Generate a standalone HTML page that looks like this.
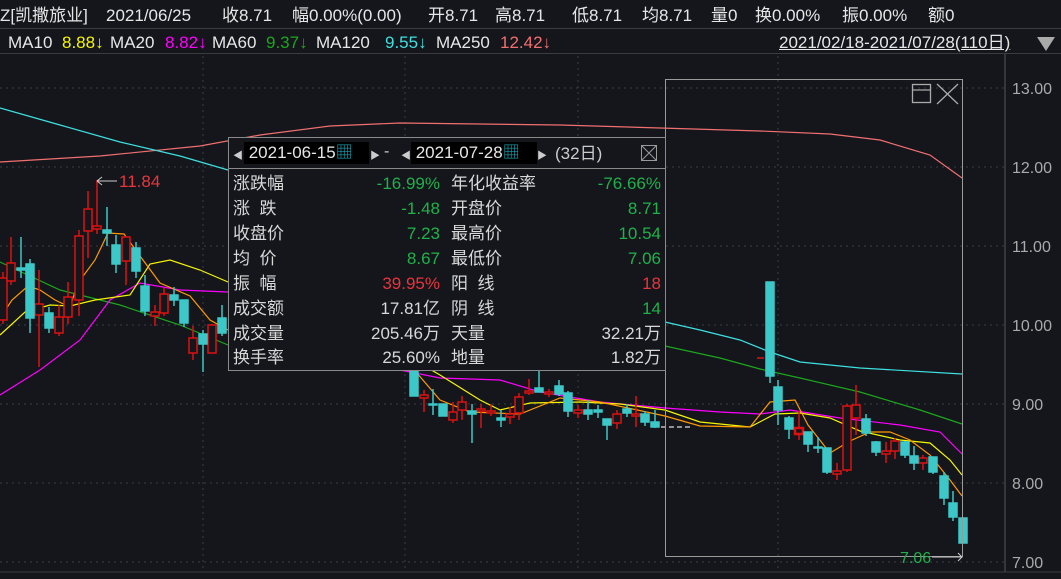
<!DOCTYPE html>
<html><head><meta charset="utf-8"><style>
body{margin:0;width:1061px;height:579px;background:#14161c;overflow:hidden;font-family:"Liberation Sans","Noto Sans CJK SC",sans-serif;position:relative}
.t{position:absolute;white-space:nowrap;font-size:17px;line-height:20px;color:#e6e6e6}
.pop{position:absolute;left:228px;top:137px;width:436px;height:232px;border:1px solid #8a8a8a;background:#14161c}
.row{position:absolute;left:0;width:436px;height:25px;font-size:17px;line-height:25px;color:#d8d8d8}
.row span{position:absolute;top:0;line-height:25px}
.g{color:#1fb14a}.r{color:#e8353d}
.db{position:absolute;top:4px;height:22px;background:#000;color:#e6e6e6;font-size:17px;line-height:22px}
</style></head><body>
<div class="t" style="left:0;top:6px">Z[凯撒旅业]</div>
<div class="t" style="left:106px;top:6px">2021/06/25</div>
<div class="t" style="left:222px;top:6px">收8.71</div>
<div class="t" style="left:292px;top:6px">幅0.00%(0.00)</div>
<div class="t" style="left:428px;top:6px">开8.71</div>
<div class="t" style="left:495px;top:6px">高8.71</div>
<div class="t" style="left:572px;top:6px">低8.71</div>
<div class="t" style="left:642px;top:6px">均8.71</div>
<div class="t" style="left:711px;top:6px">量0</div>
<div class="t" style="left:755px;top:6px">换0.00%</div>
<div class="t" style="left:842px;top:6px">振0.00%</div>
<div class="t" style="left:928px;top:6px">额0</div>
<div style="position:absolute;left:0;top:28px;width:1061px;height:1px;background:#3a3c42"></div>
<div class="t" style="left:8px;top:33px">MA10</div><div class="t" style="left:62px;top:33px;color:#f5f500">8.88↓</div>
<div class="t" style="left:110px;top:33px">MA20</div><div class="t" style="left:165px;top:33px;color:#f0f">8.82↓</div>
<div class="t" style="left:212px;top:33px">MA60</div><div class="t" style="left:266px;top:33px;color:#1ca61c">9.37↓</div>
<div class="t" style="left:316px;top:33px">MA120</div><div class="t" style="left:385px;top:33px;color:#3ee0e0">9.55↓</div>
<div class="t" style="left:436px;top:33px">MA250</div><div class="t" style="left:500px;top:33px;color:#f07070">12.42↓</div>
<div class="t" style="left:779px;top:33px;text-decoration:underline">2021/02/18-2021/07/28(110日)</div>
<div style="position:absolute;left:1037px;top:37px;width:0;height:0;border-left:9px solid transparent;border-right:9px solid transparent;border-top:14px solid #aaa"></div>
<div style="position:absolute;left:0;top:53px;width:1061px;height:1px;background:#3a3c42"></div>

<svg width="1061" height="579" style="position:absolute;left:0;top:0">
<g stroke="#3c3f46" stroke-dasharray="2,4" stroke-width="1">
<line x1="0" y1="88" x2="1005" y2="88"/><line x1="0" y1="167" x2="1005" y2="167"/><line x1="0" y1="246" x2="1005" y2="246"/><line x1="0" y1="325" x2="1005" y2="325"/><line x1="0" y1="404" x2="1005" y2="404"/><line x1="0" y1="483" x2="1005" y2="483"/><line x1="0" y1="562" x2="1005" y2="562"/>
<line x1="203" y1="56" x2="203" y2="572"/><line x1="405" y1="56" x2="405" y2="572"/><line x1="578" y1="56" x2="578" y2="572"/><line x1="778" y1="56" x2="778" y2="572"/>
</g>
<line x1="1005" y1="54" x2="1005" y2="572" stroke="#555"/>
<line x1="0" y1="572" x2="1061" y2="572" stroke="#3a3c42"/>
<g fill="#aaa" font-size="16" font-family="Liberation Sans">
<text x="1012" y="94">13.00</text><text x="1012" y="173">12.00</text><text x="1012" y="252">11.00</text><text x="1012" y="331">10.00</text><text x="1012" y="410">9.00</text><text x="1012" y="489">8.00</text><text x="1012" y="568">7.00</text>
</g>
<g fill="none" stroke-width="1.2">
<polyline stroke="#f07070" points="0,162 100,156 200,146 260,135 330,126 400,123 480,124 560,125 660,128 760,131 830,134 880,140 930,155 962,178"/>
<polyline stroke="#3ee0e0" points="0,108 60,125 120,142 180,156 228,170"/>
<polyline stroke="#3ee0e0" points="665,322 700,330 740,340 770,352 800,362 860,368 962,374"/>
<polyline stroke="#1ca61c" points="0,262 60,290 120,305 180,325 228,345"/>
<polyline stroke="#1ca61c" points="665,346 720,358 760,369 800,378 860,392 920,410 962,424"/>
<polyline stroke="#f0f" points="0,395 40,370 80,340 110,300 140,283 180,290 228,292"/>
<polyline stroke="#f0f" points="400,370 440,378 500,380 540,392 600,402 665,408 720,412 760,414 790,410 840,418 900,425 940,432 962,454"/>
<polyline stroke="#f5f500" points="0,335 25,312 50,305 70,306 95,300 130,295 150,264 170,260 200,270 228,282"/>
<polyline stroke="#f5f500" points="400,352 440,375 480,400 500,410 530,403 580,402 620,404 665,410 700,422 750,427 775,414 800,413 830,418 860,431 900,440 930,443 950,460 962,475"/>
<polyline stroke="#ff9900" points="0,318 12,300 28,286 40,290 55,300 70,307 78,283 95,260 108,233 124,234 140,256 160,283 190,296 210,320 228,330"/>
<polyline stroke="#ff9900" points="410,365 440,400 470,412 520,414 560,398 600,402 665,416 700,426 750,427 770,402 795,400 808,425 830,453 850,441 870,432 890,432 910,440 930,455 950,480 962,496"/>
<line x1="661" y1="427" x2="690" y2="427" stroke="#ddd" stroke-dasharray="5,3"/>
</g>
<g stroke-width="1.5">
<g stroke="#d11" fill="none">
<path d="M3,272V324M11,237V285M39,270V367M59,305V336M68,282V324M79,230V316M88,191V258M97,180V234M126,236V285M155,305V326M164,288V316M193,326V360M212,324V347M424,390V412M453,402V423M462,396V420M481,404V428M491,404V416M510,407V424M519,393V420M529,379V395M549,389V397M578,405V418M617,410V429M636,396V427M799,411V440M837,463V480M847,404V472M856,385V435M886,442V463M895,438V459M923,455V470"/>
<rect x="-1" y="278" width="8" height="42" fill="#14161c"/><rect x="7" y="263" width="8" height="18" fill="#14161c"/><rect x="35" y="304" width="8" height="11" fill="#14161c"/><rect x="55" y="317" width="8" height="16" fill="#14161c"/><rect x="64" y="297" width="8" height="20" fill="#14161c"/><rect x="75" y="236" width="8" height="64" fill="#14161c"/><rect x="84" y="209" width="8" height="22" fill="#14161c"/><rect x="93" y="226" width="8" height="3" fill="#14161c"/><rect x="122" y="237" width="8" height="24" fill="#14161c"/><rect x="151" y="312" width="8" height="4" fill="#14161c"/><rect x="160" y="294" width="8" height="19" fill="#14161c"/><rect x="189" y="338" width="8" height="15" fill="#14161c"/><rect x="208" y="325" width="8" height="28" fill="#14161c"/>
<rect x="420" y="395" width="8" height="3" fill="#14161c"/><rect x="449" y="412" width="8" height="8" fill="#14161c"/><rect x="458" y="402" width="8" height="8" fill="#14161c"/><rect x="477" y="409" width="8" height="2" fill="#14161c"/><rect x="487" y="411" width="8" height="2" fill="#14161c"/><rect x="506" y="414" width="8" height="3" fill="#14161c"/><rect x="515" y="397" width="8" height="16" fill="#14161c"/><rect x="525" y="391" width="8" height="2" fill="#14161c"/><rect x="545" y="392" width="8" height="2" fill="#14161c"/><rect x="574" y="410" width="8" height="3" fill="#14161c"/><rect x="613" y="414" width="8" height="9" fill="#14161c"/><rect x="632" y="414" width="8" height="2" fill="#14161c"/>
<rect x="795" y="428" width="8" height="6" stroke-width="2.5" fill="#14161c"/><rect x="833" y="471" width="8" height="3" fill="#14161c"/><rect x="843" y="406" width="8" height="64" fill="#14161c"/><rect x="852" y="405" width="8" height="13" fill="#14161c"/><rect x="882" y="451" width="8" height="3" fill="#14161c"/><rect x="891" y="441" width="8" height="10" fill="#14161c"/><rect x="919" y="458" width="8" height="5" fill="#14161c"/>
<path d="M757,358H764"/>
</g>
<g stroke="#3cc8c8" fill="#3cc8c8">
<path d="M21,237V278M30,259V333M49,307V333M107,207V246M116,235V273M136,242V278M145,275V316M174,287V306M184,300V327M203,330V372M222,305V336M433,389V415M443,404V416M472,404V443M501,410V427M539,370V392M559,380V396M568,391V417M588,400V420M598,405V418M607,419V440M627,404V417M645,411V426M655,410V428M770,282V383M778,380V425M789,416V439M808,432V452M818,437V453M827,448V474M866,414V436M876,441V456M905,441V458M914,446V470M933,457V474M944,472V505M953,491V521"/>
<rect x="17" y="268" width="8" height="2"/><rect x="26" y="264" width="8" height="54"/><rect x="45" y="313" width="8" height="15"/><rect x="103" y="230" width="8" height="3"/><rect x="112" y="245" width="8" height="19"/><rect x="132" y="248" width="8" height="23"/><rect x="141" y="286" width="8" height="25"/><rect x="170" y="295" width="8" height="5"/><rect x="180" y="300" width="8" height="23"/><rect x="199" y="334" width="8" height="10"/><rect x="218" y="318" width="8" height="15"/>
<rect x="410" y="370" width="8" height="26"/><rect x="429" y="404" width="8" height="1"/><rect x="439" y="404" width="8" height="12"/><rect x="468" y="411" width="8" height="3"/><rect x="497" y="418" width="8" height="2"/><rect x="535" y="388" width="8" height="4"/><rect x="555" y="386" width="8" height="8"/><rect x="564" y="393" width="8" height="18"/><rect x="584" y="410" width="8" height="4"/><rect x="594" y="410" width="8" height="2"/><rect x="603" y="419" width="8" height="6"/><rect x="623" y="409" width="8" height="4"/><rect x="641" y="414" width="8" height="8"/><rect x="651" y="422" width="8" height="5"/>
<rect x="766" y="282" width="8" height="94"/><rect x="774" y="387" width="8" height="23"/><rect x="785" y="418" width="8" height="11"/><rect x="804" y="432" width="8" height="12"/><rect x="814" y="447" width="8" height="1"/><rect x="823" y="448" width="8" height="24"/><rect x="862" y="419" width="8" height="14"/><rect x="872" y="442" width="8" height="10"/><rect x="901" y="442" width="8" height="13"/><rect x="910" y="456" width="8" height="7"/><rect x="929" y="457" width="8" height="15"/><rect x="940" y="476" width="8" height="22"/><rect x="949" y="503" width="8" height="14"/><rect x="959" y="518" width="8" height="25"/>
</g>
</g>
<path d="M97,181H117M97,181l5,-4M97,181l5,4" stroke="#ccc" fill="none"/>
<text x="119" y="187" fill="#e8353d" font-size="17" font-family="Liberation Sans">11.84</text>
<rect x="665.5" y="79.5" width="297" height="477" fill="none" stroke="#9a9a9a"/>
<rect x="912.5" y="84.5" width="18" height="18" fill="none" stroke="#aaa" stroke-width="1.3"/><line x1="912" y1="90" x2="931" y2="90" stroke="#aaa" stroke-width="1.3"/>
<path d="M937,84L958,104M958,84L937,104" stroke="#aaa" stroke-width="1.3"/>
<text x="900" y="563" fill="#1fb14a" font-size="16" font-family="Liberation Sans">7.06</text>
<path d="M932,557H962M958,553l4,4-4,4" stroke="#ccc" fill="none"/>
</svg>

<div class="pop">
<span style="position:absolute;left:4px;top:9px;font-size:10px;color:#ccc">◀</span>
<div class="db" style="left:15px;width:125px">&nbsp;2021-06-15<span style="color:#1aa0b0">▦</span></div>
<span style="position:absolute;left:141px;top:9px;font-size:10px;color:#ccc">▶</span>
<span style="position:absolute;left:155px;top:5px;color:#ccc;font-size:16px">-</span>
<span style="position:absolute;left:172px;top:9px;font-size:10px;color:#ccc">◀</span>
<div class="db" style="left:182px;width:126px">&nbsp;2021-07-28<span style="color:#1aa0b0">▦</span></div>
<span style="position:absolute;left:308px;top:9px;font-size:10px;color:#ccc">▶</span>
<span style="position:absolute;left:326px;top:6px;color:#ccc;font-size:17px;line-height:20px">(32日)</span>
<svg width="16" height="16" style="position:absolute;left:412px;top:7px"><rect x="0.5" y="0.5" width="15" height="15" fill="none" stroke="#999"/><path d="M1,1L15,15M15,1L1,15" stroke="#999"/></svg>
<div style="position:absolute;left:0;top:30px;width:436px;height:1px;background:#8a8a8a"></div>
<div class="row" style="top:33px"><span style="left:4px">涨跌幅</span><span class="g" style="right:225px">-16.99%</span><span style="left:222px">年化收益率</span><span class="g" style="right:4px">-76.66%</span></div>
<div class="row" style="top:58px"><span style="left:4px">涨 &nbsp;跌</span><span class="g" style="right:225px">-1.48</span><span style="left:222px">开盘价</span><span class="g" style="right:4px">8.71</span></div>
<div class="row" style="top:83px"><span style="left:4px">收盘价</span><span class="g" style="right:225px">7.23</span><span style="left:222px">最高价</span><span class="g" style="right:4px">10.54</span></div>
<div class="row" style="top:108px"><span style="left:4px">均 &nbsp;价</span><span class="g" style="right:225px">8.67</span><span style="left:222px">最低价</span><span class="g" style="right:4px">7.06</span></div>
<div class="row" style="top:133px"><span style="left:4px">振 &nbsp;幅</span><span class="r" style="right:225px">39.95%</span><span style="left:222px">阳 &nbsp;线</span><span class="r" style="right:4px">18</span></div>
<div class="row" style="top:158px"><span style="left:4px">成交额</span><span style="right:225px">17.81亿</span><span style="left:222px">阴 &nbsp;线</span><span class="g" style="right:4px">14</span></div>
<div class="row" style="top:183px"><span style="left:4px">成交量</span><span style="right:225px">205.46万</span><span style="left:222px">天量</span><span style="right:4px">32.21万</span></div>
<div class="row" style="top:207px"><span style="left:4px">换手率</span><span style="right:225px">25.60%</span><span style="left:222px">地量</span><span style="right:4px">1.82万</span></div>
</div>
</body></html>
